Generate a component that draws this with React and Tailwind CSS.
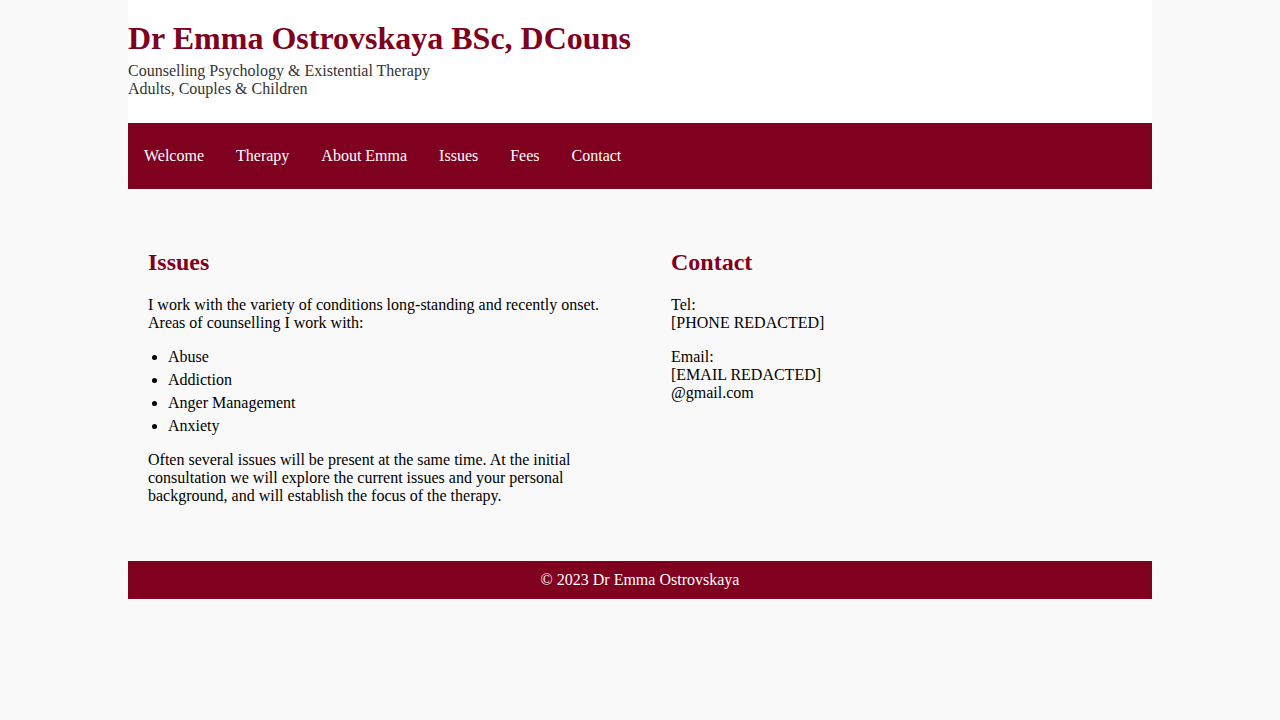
const navItems = ['Welcome', 'Therapy', 'About Emma', 'Issues', 'Fees', 'Contact'];
const issues = ['Abuse', 'Addiction', 'Anger Management', 'Anxiety'];

const App = () => {
  return (
    <div className="min-h-[720px] bg-[#f9f9f9] text-black text-[16px] leading-[18px] font-['Liberation_Serif',serif]">
      <div className="w-[1024px] mx-auto">
        {/* Header */}
        <header className="bg-white py-5">
          <h1 className="text-[32px] font-bold text-[#800020] leading-[1.15]">Dr Emma Ostrovskaya BSc, DCouns</h1>
          <p className="my-[5px] text-[#333]">
            Counselling Psychology &amp; Existential Therapy
            <br />
            Adults, Couples &amp; Children
          </p>
        </header>

        {/* Nav */}
        <nav className="bg-[#800020]">
          <ul className="flex">
            {navItems.map((item) => (
              <li key={item}>
                <a href="#" className="block px-4 py-6 text-white">{item}</a>
              </li>
            ))}
          </ul>
        </nav>

        {/* Main */}
        <main className="py-5 flex gap-[22px]">
          <section className="flex-1 p-5">
            <h2 className="text-[24px] font-bold text-[#800020] leading-[1.15] my-5">Issues</h2>
            <p className="mb-4">
              I work with the variety of conditions long-standing and recently onset. Areas of counselling I work with:
            </p>
            <ul className="list-disc pl-5 mb-4">
              {issues.map((i) => (
                <li key={i} className="mb-[5px] last:mb-0">{i}</li>
              ))}
            </ul>
            <p className="mb-4">
              Often several issues will be present at the same time. At the initial consultation we will explore the current issues and your personal background, and will establish the focus of the therapy.
            </p>
          </section>
          <section className="flex-1 p-5">
            <h2 className="text-[24px] font-bold text-[#800020] leading-[1.15] my-5">Contact</h2>
            <p className="mb-4">
              Tel:
              <br />
              [PHONE REDACTED]
            </p>
            <p className="mb-4">
              Email:
              <br />
              [EMAIL REDACTED]
              <br />
              @gmail.com
            </p>
          </section>
        </main>

        {/* Footer */}
        <footer className="bg-[#800020] text-white text-center py-[10px]">
          © 2023 Dr Emma Ostrovskaya
        </footer>
      </div>
    </div>
  );
};

export default App;
